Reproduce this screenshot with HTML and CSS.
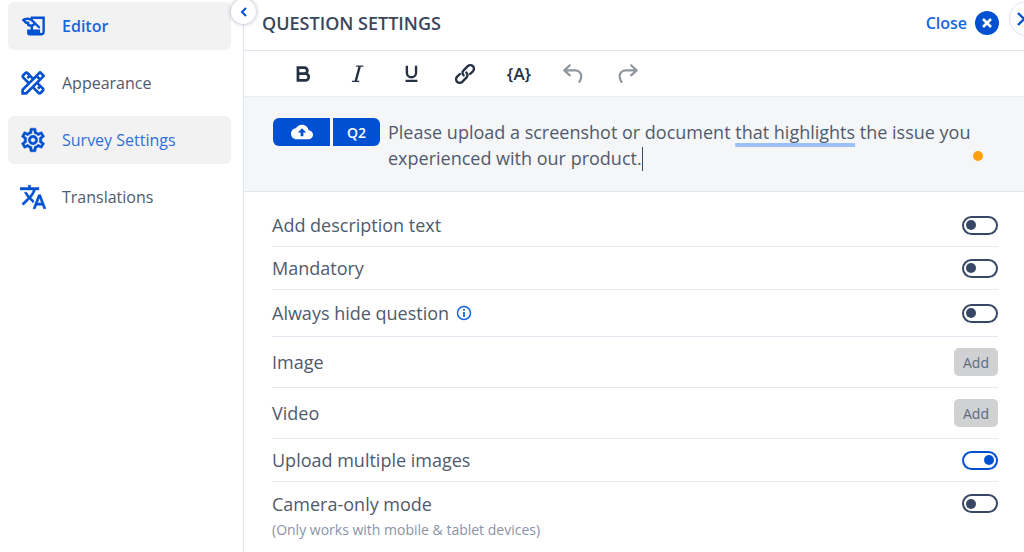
FILE: index.html
```html
<!DOCTYPE html>
<html lang="en">
<head>
    <meta charset="UTF-8">
    <meta name="viewport" content="width=device-width, initial-scale=1">
    <title>Question settings</title>
    <link rel="stylesheet" href="styles.css">
</head>
<body>
    <aside class="sidebar">
        <nav class="menu">
            <a href="#editor" class="menu-item active">
                <svg class="icon" viewBox="0 1 22 22" fill="#0051d2">
                    <path d="M9 4v1.380c-.83-.33-1.720-.5-2.610-.5-1.790 0-3.580.68-4.950 2.050l3.330 3.330h1.110v1.110c.86.86 1.980 1.310 3.110 1.360V15H6v3c0 1.100.9 2 2 2h10c1.660 0 3-1.340 3-3V4H9zm-1.110 6.410V8.260H5.610L4.570 7.220a5.070 5.070 0 0 1 1.820-.34c1.340 0 2.590.52 3.540 1.460l1.410 1.410-.2.200c-.51.510-1.190.8-1.920.8-.47 0-.93-.12-1.330-.34zM19 17c0 .55-.45 1-1 1s-1-.45-1-1v-2h-6v-2.590c.57-.23 1.100-.57 1.560-1.030l.2-.2L15.590 14H17v-1.410l-6-5.970V6h8v11z"/>
                </svg>
                <span>Editor</span>
            </a>
            <a href="#appearance" class="menu-item">
                <svg class="icon" viewBox="2 2 20 20" fill="#0051d2">
                    <path d="M20.970 7.270c.39-.39.39-1.020 0-1.410l-2.830-2.830c-.39-.39-1.020-.39-1.410 0l-4.490 4.490-3.890-3.890c-.78-.78-2.050-.78-2.830 0l-1.900 1.900c-.78.78-.78 2.050 0 2.830l3.890 3.890L3 16.760V21h4.240l4.520-4.520 3.890 3.890c.95.95 2.230.6 2.830 0l1.900-1.900c.78-.78.78-2.050 0-2.830l-3.890-3.890 4.480-4.480zM5.040 6.940l1.890-1.900 1.270 1.270L7.020 7.500l1.410 1.410 1.190-1.190 1.200 1.210-1.890 1.900-3.890-3.890zM16.270 14.380l-1.190 1.190 1.410 1.410 1.190-1.190 1.270 1.270-1.900 1.900-3.890-3.890 1.900-1.900 1.210 1.210zM6.410 19H5v-1.410l9.660-9.660 1.410 1.410L6.410 19zm11.080-11.080l-1.410-1.410 1.350-1.350 1.410 1.410-1.350 1.350z"/>
                </svg>
                <span>Appearance</span>
            </a>
            <a href="#settings" class="menu-item hovered">
                <svg class="icon" viewBox="1 1 22 22" fill="#0051d2" stroke="#0051d2" stroke-width="0.400">
                    <path d="M19.430 12.980c.04-.32.070-.64.070-.98 0-.34-.03-.66-.07-.98l2.110-1.650c.19-.15.240-.42.120-.64l-2-3.460c-.09-.16-.26-.25-.44-.25-.06 0-.12.010-.17.030l-2.490 1c-.52-.4-1.080-.73-1.690-.98l-.38-2.650C14.460 2.180 14.250 2 14 2h-4c-.25 0-.46.180-.49.420l-.38 2.650c-.61.250-1.170.59-1.690.98l-2.490-1c-.06-.02-.12-.03-.18-.03-.17 0-.34.090-.43.250l-2 3.460c-.13.220-.07.490.12.640l2.110 1.650c-.04.320-.07.650-.07.980s.03.660.07.980l-2.110 1.650c-.19.150-.24.420-.12.640l2 3.460c.09.160.26.250.44.250.06 0 .12-.01.170-.03l2.490-1c.52.400 1.080.730 1.690.980l.38 2.650c.03.240.24.420.490.420h4c.25 0 .46-.18.490-.42l.38-2.650c.61-.25 1.170-.59 1.690-.98l2.490 1c.06.020.12.030.18.030.17 0 .34-.09.430-.25l2-3.460c.12-.22.070-.49-.12-.64l-2.110-1.650zm-1.980-1.710c.04.310.05.520.05.730 0 .21-.02.430-.05.730l-.14 1.130.89.700 1.080.840-.7 1.210-1.270-.51-1.040-.42-.9.680c-.43.320-.84.560-1.250.730l-1.060.43-.16 1.130-.2 1.350h-1.400l-.19-1.350-.16-1.130-1.060-.43c-.43-.18-.83-.41-1.230-.71l-.91-.7-1.060.43-1.270.510-.7-1.210 1.080-.84.890-.7-.14-1.130c-.03-.31-.05-.54-.05-.74s.02-.43.050-.73l.14-1.130-.89-.7-1.080-.84.700-1.210 1.270.510 1.040.420.900-.68c.43-.32.840-.56 1.250-.73l1.060-.43.160-1.130.2-1.350h1.390l.19 1.350.16 1.130 1.060.430c.43.180.83.410 1.230.710l.91.700 1.060-.43 1.270-.51.700 1.210-1.070.850-.89.700.14 1.130zM12 8c-2.210 0-4 1.790-4 4s1.790 4 4 4 4-1.790 4-4-1.790-4-4-4zm0 6c-1.100 0-2-.9-2-2s.9-2 2-2 2 .9 2 2-.9 2-2 2z"/>
                </svg>
                <span>Survey Settings</span>
            </a>
            <a href="#translations" class="menu-item">
                <svg class="icon" viewBox="1 1 22 22" fill="#0051d2" stroke="#0051d2" stroke-width="0.400">
                    <path d="M12.870 15.070l-2.540-2.510.03-.03c1.740-1.940 2.980-4.170 3.710-6.530H17V4h-7V2H8v2H1v1.990h11.170C11.500 7.920 10.440 9.750 9 11.350 8.070 10.320 7.300 9.190 6.690 8h-2c.73 1.630 1.730 3.170 2.980 4.560l-5.090 5.020L4 19l5-5 3.110 3.110.76-2.040zM18.500 10h-2L12 22h2l1.120-3h4.750L21 22h2l-4.500-12zm-2.620 7l1.620-4.330L19.120 17h-3.240z"/>
                </svg>
                <span>Translations</span>
            </a>
        </nav>
        <button type="button" class="collapse" aria-label="Collapse menu">
            <svg width="8" height="10" viewBox="0 0 8 10"><path d="M6 1L2 5l4 4" fill="none" stroke="#0051d2" stroke-width="2"/></svg>
        </button>
    </aside>

    <main class="panel">
        <header class="panel-header">
            <h1>QUESTION SETTINGS</h1>
            <button type="button" class="close">
                Close
                <svg width="24" height="24" viewBox="0 0 24 24">
                    <circle cx="12" cy="12" r="12" fill="#0051d2"/>
                    <path d="M8 8l8 8M16 8l-8 8" stroke="#fff" stroke-width="2.600"/>
                </svg>
            </button>
            <button type="button" class="expand" aria-label="Next panel">
                <svg width="10" height="14" viewBox="0 0 10 14"><path d="M2 1l6 6-6 6" fill="none" stroke="#0051d2" stroke-width="2.400"/></svg>
            </button>
        </header>

        <div class="toolbar">
            <button type="button" aria-label="Bold">
                <svg viewBox="0 0 24 24" fill="none" stroke="#253244" stroke-width="3"><path d="M6.500 5h7a3.200 3.200 0 0 1 0 6.500H6.500zM6.500 11.500h8a3.500 3.500 0 0 1 0 7.500h-8z"/></svg>
            </button>
            <button type="button" aria-label="Italic">
                <svg viewBox="0 0 24 24" fill="none" stroke="#253244"><path d="M15 3.500L10.500 20" stroke-width="2.600"/><path d="M11 3.500h8M6.500 20h8" stroke-width="1.400"/></svg>
            </button>
            <button type="button" aria-label="Underline">
                <svg viewBox="0 0 24 24" fill="none" stroke="#253244" stroke-width="2.600"><path d="M7.500 3v7.500a5 5 0 0 0 10 0V3M6 19.500h13"/></svg>
            </button>
            <button type="button" aria-label="Link">
                <svg viewBox="0 0 24 24" fill="none" stroke="#253244" stroke-width="2.600" stroke-linecap="round"><path d="M10.500 13.500a3.700 3.700 0 0 1 0-5.500l4.500-4.500a3.900 3.900 0 0 1 5.600 5.600L17.500 12"/><path d="M13.500 10.500a3.700 3.700 0 0 1 0 5.500l-4.500 4.500a3.900 3.900 0 0 1-5.600-5.600L6.500 12"/></svg>
            </button>
            <button type="button" class="variable" aria-label="Insert variable">{A}</button>
            <button type="button" aria-label="Undo">
                <svg viewBox="0 0 24 24" fill="none" stroke="#8e979f" stroke-width="2.400" stroke-linecap="round" stroke-linejoin="round"><path d="M8.500 2.500L2.500 8l6 5.500M3 8h11.500a6.500 6.500 0 0 1 6.500 6.500q0 3.500-2 6"/></svg>
            </button>
            <button type="button" aria-label="Redo">
                <svg viewBox="0 0 24 24" fill="none" stroke="#8e979f" stroke-width="2.400" stroke-linecap="round" stroke-linejoin="round"><path d="M16.500 2.500l6 5.500-6 5.500M22 8H10.500A6.500 6.500 0 0 0 4 14.500q0 3.500 2 6"/></svg>
            </button>
        </div>

        <section class="question">
            <div class="badge">
                <span class="badge-type">
                    <svg width="22" height="16" viewBox="0 4 24 16"><path d="M19.350 10.040C18.670 6.590 15.640 4 12 4 9.110 4 6.600 5.640 5.350 8.040 2.340 8.360 0 10.910 0 14c0 3.310 2.690 6 6 6h13c2.760 0 5-2.240 5-5 0-2.640-2.050-4.780-4.650-4.960z" fill="#fff"/><path d="M12 8l-4.500 4.500H10.500v4h3v-4h3z" fill="#0051d2"/></svg>
                </span>
                <span class="badge-number">Q2</span>
            </div>
            <div class="question-text" role="textbox" contenteditable="true" spellcheck="false" aria-label="Question text">Please upload a screenshot or document <span class="hint">that highlights</span> the issue you experienced with our product.<span class="caret"></span></div>
            <span class="status"></span>
        </section>

        <form class="options">
            <div class="row">
                <label for="description">Add description text</label>
                <input type="checkbox" class="switch" id="description">
            </div>
            <div class="row">
                <label for="mandatory">Mandatory</label>
                <input type="checkbox" class="switch" id="mandatory">
            </div>
            <div class="row row-info">
                <label for="hide">Always hide question</label>
                <svg class="info" width="16" height="16" viewBox="0 0 16 16" fill="none" stroke="#1766dc"><circle cx="8" cy="8" r="6.500" stroke-width="1.500"/><path d="M8 7v5M8 4v1.800" stroke-width="1.800"/></svg>
                <input type="checkbox" class="switch" id="hide">
            </div>
            <div class="row row-add">
                <span id="image">Image</span>
                <button type="button" class="add" aria-describedby="image">Add</button>
            </div>
            <div class="row row-add">
                <span id="video">Video</span>
                <button type="button" class="add" aria-describedby="video">Add</button>
            </div>
            <div class="row">
                <label for="multiple">Upload multiple images</label>
                <input type="checkbox" class="switch" id="multiple" checked>
            </div>
            <div class="row row-last">
                <label for="camera">Camera-only mode</label>
                <input type="checkbox" class="switch" id="camera">
            </div>
            <p class="note">(Only works with mobile &amp; tablet devices)</p>
        </form>
    </main>
</body>
</html>
```
FILE: styles.css
```css
* {
    box-sizing: border-box;
}

body {
    margin: 0;
    min-height: 100vh;
    display: flex;
    overflow-x: hidden;
    font-family: "Open Sans", "Noto Sans", sans-serif;
    font-size: 18px;
    color: #505a6e;
    background-color: #fff;
}

button {
    font-family: inherit;
    border: none;
    padding: 0;
    background: none;
    cursor: pointer;
}

.sidebar {
    position: relative;
    flex: 0 0 244px;
    border-right: 1px solid #e1e5ee;
}

.menu {
    display: flex;
    flex-direction: column;
    gap: 9px;
    padding: 2px 12px 0 8px;
}

.menu-item {
    display: flex;
    align-items: center;
    gap: 16px;
    height: 48px;
    padding-left: 12px;
    border-radius: 6px;
    font-size: 16px;
    color: #505a6e;
    text-decoration: none;
}

.menu-item .icon {
    width: 26px;
    height: 26px;
}

.menu-item.active {
    background-color: #f2f2f2;
    color: #1766dc;
    font-weight: 600;
}

.menu-item.hovered {
    background-color: #f2f2f2;
    color: #2e70d9;
}

.collapse {
    position: absolute;
    top: -1px;
    right: -13px;
    width: 25px;
    height: 25px;
    display: flex;
    align-items: center;
    justify-content: center;
    border-radius: 50%;
    background-color: #fff;
    box-shadow: 0 0 4px rgba(40, 50, 90, 0.4);
}

.panel {
    flex: 1;
    min-width: 0;
}

.panel-header {
    position: relative;
    display: flex;
    align-items: center;
    justify-content: space-between;
    height: 51px;
    padding: 0 25px 5px 18px;
    border-bottom: 1px solid #e1e5ee;
}

.panel-header h1 {
    margin: 0;
    font-size: 18px;
    font-weight: 600;
    color: #3b475c;
}

.close {
    display: flex;
    align-items: center;
    gap: 8px;
    font-size: 16px;
    font-weight: 600;
    color: #1766dc;
}

.expand {
    position: absolute;
    top: 1px;
    right: -20px;
    width: 35px;
    height: 35px;
    padding-left: 6px;
    display: flex;
    align-items: center;
    border: 1px solid #dfe3f0;
    border-radius: 50%;
    background-color: #fff;
}

.toolbar {
    display: flex;
    align-items: center;
    gap: 30px;
    height: 46px;
    padding-left: 47px;
    border-bottom: 1px solid #e9ebf0;
}

.toolbar button {
    width: 24px;
    height: 24px;
    display: flex;
    align-items: center;
    justify-content: center;
}

.toolbar svg {
    width: 22px;
    height: 22px;
}

.toolbar .variable {
    font-size: 17px;
    font-weight: 600;
    color: #253244;
}

.question {
    position: relative;
    display: flex;
    align-items: flex-start;
    gap: 8px;
    min-height: 95px;
    padding: 21px 28px 19px 29px;
    background-color: #f4f6f8;
    border-bottom: 1px solid #dfe4ec;
}

.badge {
    display: flex;
    gap: 3px;
    color: #fff;
    font-size: 14px;
    font-weight: 600;
}

.badge-type,
.badge-number {
    display: flex;
    align-items: center;
    justify-content: center;
    height: 28px;
    background-color: #0051d2;
}

.badge-type {
    width: 57px;
    border-radius: 6px 0 0 6px;
}

.badge-number {
    width: 47px;
    border-radius: 0 6px 6px 0;
}

.question-text {
    flex: 1;
    line-height: 26px;
    padding-top: 1px;
    outline: none;
}

.hint {
    text-decoration: underline 4px #9dc0f8;
    text-underline-offset: 4px;
    text-decoration-skip-ink: none;
}

.caret {
    display: inline-block;
    height: 24px;
    margin-top: -2px;
    border-left: 1px solid #3b475c;
    vertical-align: middle;
}

.status {
    position: absolute;
    right: 41px;
    bottom: 30px;
    width: 10px;
    height: 10px;
    border-radius: 50%;
    background-color: #ff9f0a;
}

.options {
    padding: 12px 26px 12px 28px;
}

.row {
    display: flex;
    align-items: center;
    min-height: 43px;
    border-bottom: 1px solid #e5e8f1;
}

.row-info {
    min-height: 47px;
}

.row-add {
    min-height: 51px;
}

.row-last {
    border-bottom: none;
}

.info {
    margin-left: 7px;
}

.switch {
    appearance: none;
    display: flex;
    align-items: center;
    width: 36px;
    height: 19px;
    margin: 0 0 0 auto;
    padding: 0 2px;
    border: 2px solid #384766;
    border-radius: 10px;
    cursor: pointer;
}

.switch::before {
    content: "";
    width: 10px;
    height: 10px;
    border-radius: 50%;
    background-color: #384766;
}

.switch:checked {
    justify-content: flex-end;
    border-color: #0051d2;
}

.switch:checked::before {
    background-color: #0051d2;
}

.add {
    width: 44px;
    height: 28px;
    margin-left: auto;
    border-radius: 5px;
    background-color: #cfd1d3;
    color: #5f697c;
    font-size: 14px;
}

.note {
    margin: -5px 0 0;
    font-size: 14px;
    line-height: 20px;
    color: #8a93a8;
}
```
